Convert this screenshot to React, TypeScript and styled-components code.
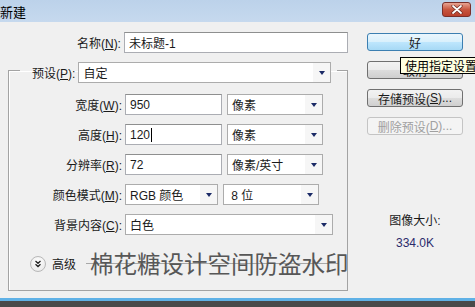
import styled, { createGlobalStyle } from 'styled-components';

const GlobalStyle = createGlobalStyle`
  html, body {
    margin: 0;
    padding: 0;
    background: #4a4a4a;
  }
  body {
    font-family: "Liberation Sans", "Noto Sans CJK SC", sans-serif;
    font-size: 12px;
    color: #1a1a1a;
  }
`;

const Window = styled.div`
  width: 475px;
  height: 301px;
  display: flex;
  flex-direction: column;
  overflow: hidden;
`;

const TitleBar = styled.div`
  height: 22px;
  flex: none;
  display: flex;
  align-items: center;
  justify-content: space-between;
  padding-right: 4px;
  background: linear-gradient(#bcd2ea, #c6d9ee);
  font-size: 13px;
  color: #000;
`;

const CloseButton = styled.div`
  width: 27px;
  height: 13px;
  margin-top: -4px;
  border: 1px solid #7a2f2a;
  border-radius: 3px;
  background: linear-gradient(#e8a493, #c8563f 50%, #b9402c);
  display: flex;
  align-items: center;
  justify-content: center;
`;

const Body = styled.div`
  flex: 1;
  display: flex;
  gap: 19px;
  padding: 10px 0 0 8px;
  background: #f0f0f0;
  border-bottom: 3px solid #5fb1e6;
`;

const LeftColumn = styled.div`
  width: 340px;
  display: flex;
  flex-direction: column;
`;

const Row = styled.div<{ $labelWidth: number }>`
  display: flex;
  align-items: center;
  gap: 3px;
  height: 21px;

  & > label {
    width: ${(p) => p.$labelWidth}px;
    text-align: right;
    white-space: nowrap;
  }
`;

const NameRow = styled(Row)`
  margin-bottom: 5px;
`;

const Group = styled.fieldset`
  margin: 0;
  padding: 11px 0 18px 11px;
  border: 1px solid #a3a3a3;
  box-shadow: inset 1px 1px 0 #fff;
  display: flex;
  flex-direction: column;
  gap: 9px;
  min-width: 0;
`;

const Legend = styled.legend`
  padding: 4px 6px 0 12px;
  display: flex;
  align-items: center;
  gap: 3px;
`;

const Field = styled.div<{ $width: number }>`
  width: ${(p) => p.$width}px;
  height: 21px;
  box-sizing: border-box;
  border: 1px solid #abadb3;
  border-top-color: #8e8f8f;
  background: #fff;
  display: flex;
  align-items: center;
  padding-left: 4px;
  white-space: nowrap;
`;

const Select = styled(Field)`
  padding-right: 0;
  justify-content: space-between;
  border-color: #acacac;
`;

const ArrowBox = styled.span`
  width: 17px;
  align-self: stretch;
  background: #f6f6f6;
  display: flex;
  align-items: center;
  justify-content: center;
  &::after {
    content: '';
    border-left: 3.5px solid transparent;
    border-right: 3.5px solid transparent;
    border-top: 4px solid #1b2a66;
  }
`;

const Pair = styled.div`
  display: flex;
  gap: 5px;
  align-items: center;
`;

const Caret = styled.span`
  display: inline-block;
  width: 1px;
  height: 14px;
  margin-left: 1px;
  background: #000;
`;

const AdvancedRow = styled.div`
  position: relative;
  margin-top: 11px;
  display: flex;
  align-items: center;
  gap: 6px;
  padding-left: 10px;
  height: 17px;
  padding-right: 8px;
`;

const Disclosure = styled.span`
  width: 14px;
  height: 14px;
  border: 1px solid #b8b8b8;
  border-radius: 50%;
  background: radial-gradient(circle at 50% 35%, #fff, #e4e4e4);
  display: flex;
  align-items: center;
  justify-content: center;
`;

const Rule = styled.span`
  flex: 1;
  height: 1px;
  margin-left: 4px;
  background: #a8a8a8;
`;

const Watermark = styled.div`
  position: absolute;
  left: 70px;
  top: -4px;
  font-family: "Noto Sans CJK SC", sans-serif;
  font-size: 23.5px;
  line-height: 24px;
  color: #575757;
  white-space: nowrap;
`;

const RightColumn = styled.div`
  width: 96px;
  padding-top: 1px;
  display: flex;
  flex-direction: column;
  gap: 10px;
`;

const Button = styled.div<{ $default?: boolean; $disabled?: boolean }>`
  position: relative;
  height: 18px;
  box-sizing: border-box;
  border: 1px solid ${(p) => (p.$default ? '#3c7fb1' : p.$disabled ? '#c4c4c4' : '#707070')};
  border-radius: 3px;
  background: ${(p) =>
    p.$default
      ? 'linear-gradient(#eaf6fd, #d9f0fc 50%, #bee6fd 51%, #a7d9f5)'
      : p.$disabled
        ? '#f4f4f4'
        : 'linear-gradient(#f2f2f2, #ebebeb 50%, #dddddd 51%, #cfcfcf)'};
  color: ${(p) => (p.$disabled ? '#a0a0a0' : '#1a1a1a')};
  display: flex;
  align-items: center;
  justify-content: center;
  white-space: nowrap;
`;

const Tooltip = styled.div`
  position: absolute;
  left: 32px;
  top: -5px;
  height: 15px;
  padding: 0 4px;
  border: 1px solid #000;
  background: #ffffe1;
  color: #000;
  display: flex;
  align-items: center;
  white-space: nowrap;
`;

const SizeInfo = styled.div`
  margin-top: 66px;
  display: flex;
  flex-direction: column;
  align-items: center;
  gap: 8px;
`;

const SizeValue = styled.span`
  color: #2b2b6b;
`;

const U = styled.u`
  text-underline-offset: 1px;
`;

const Label = ({ text, k }: { text: string; k: string }) => (
  <>
    {text}(<U>{k}</U>):
  </>
);

const App = () => (
  <>
    <GlobalStyle />
    <Window>
      <TitleBar>
        <span>新建</span>
        <CloseButton>
          <svg width="12" height="9" viewBox="0 0 12 9">
            <path d="M2 1 L10 8 M10 1 L2 8" stroke="#6b2a22" strokeWidth="3.2" strokeLinecap="round" />
            <path d="M2 1 L10 8 M10 1 L2 8" stroke="#fff" strokeWidth="1.8" strokeLinecap="round" />
          </svg>
        </CloseButton>
      </TitleBar>
      <Body>
        <LeftColumn>
          <NameRow $labelWidth={114}>
            <label><Label text="名称" k="N" /></label>
            <Field $width={226}>未标题-1</Field>
          </NameRow>
          <Group>
            <Legend>
              <span><Label text="预设" k="P" /></span>
              <Select $width={253}>
                自定
                <ArrowBox />
              </Select>
            </Legend>
            <Row $labelWidth={102}>
              <label><Label text="宽度" k="W" /></label>
              <Pair>
                <Field $width={97}>950</Field>
                <Select $width={96}>像素<ArrowBox /></Select>
              </Pair>
            </Row>
            <Row $labelWidth={102}>
              <label><Label text="高度" k="H" /></label>
              <Pair>
                <Field $width={97}>120<Caret /></Field>
                <Select $width={96}>像素<ArrowBox /></Select>
              </Pair>
            </Row>
            <Row $labelWidth={102}>
              <label><Label text="分辨率" k="R" /></label>
              <Pair>
                <Field $width={97}>72</Field>
                <Select $width={96}>像素/英寸<ArrowBox /></Select>
              </Pair>
            </Row>
            <Row $labelWidth={102}>
              <label><Label text="颜色模式" k="M" /></label>
              <Pair>
                <Select $width={93}>RGB 颜色<ArrowBox /></Select>
                <Select $width={96}>&nbsp;8 位<ArrowBox /></Select>
              </Pair>
            </Row>
            <Row $labelWidth={102}>
              <label><Label text="背景内容" k="C" /></label>
              <Select $width={208}>白色<ArrowBox /></Select>
            </Row>
            <AdvancedRow>
              <Disclosure>
                <svg width="8" height="8" viewBox="0 0 8 8">
                  <path d="M1.5 1 L4 3.3 L6.5 1 M1.5 4.3 L4 6.6 L6.5 4.3" stroke="#222" strokeWidth="1.3" fill="none" />
                </svg>
              </Disclosure>
              <span>高级</span>
              <Rule />
              <Watermark>棉花糖设计空间防盗水印</Watermark>
            </AdvancedRow>
          </Group>
        </LeftColumn>
        <RightColumn>
          <Button $default>好</Button>
          <Button>
            取消
            <Tooltip>使用指定设置</Tooltip>
          </Button>
          <Button>存储预设(<U>S</U>)...</Button>
          <Button $disabled>删除预设(<U>D</U>)...</Button>
          <SizeInfo>
            <span>图像大小:</span>
            <SizeValue>334.0K</SizeValue>
          </SizeInfo>
        </RightColumn>
      </Body>
    </Window>
  </>
);

export default App;
